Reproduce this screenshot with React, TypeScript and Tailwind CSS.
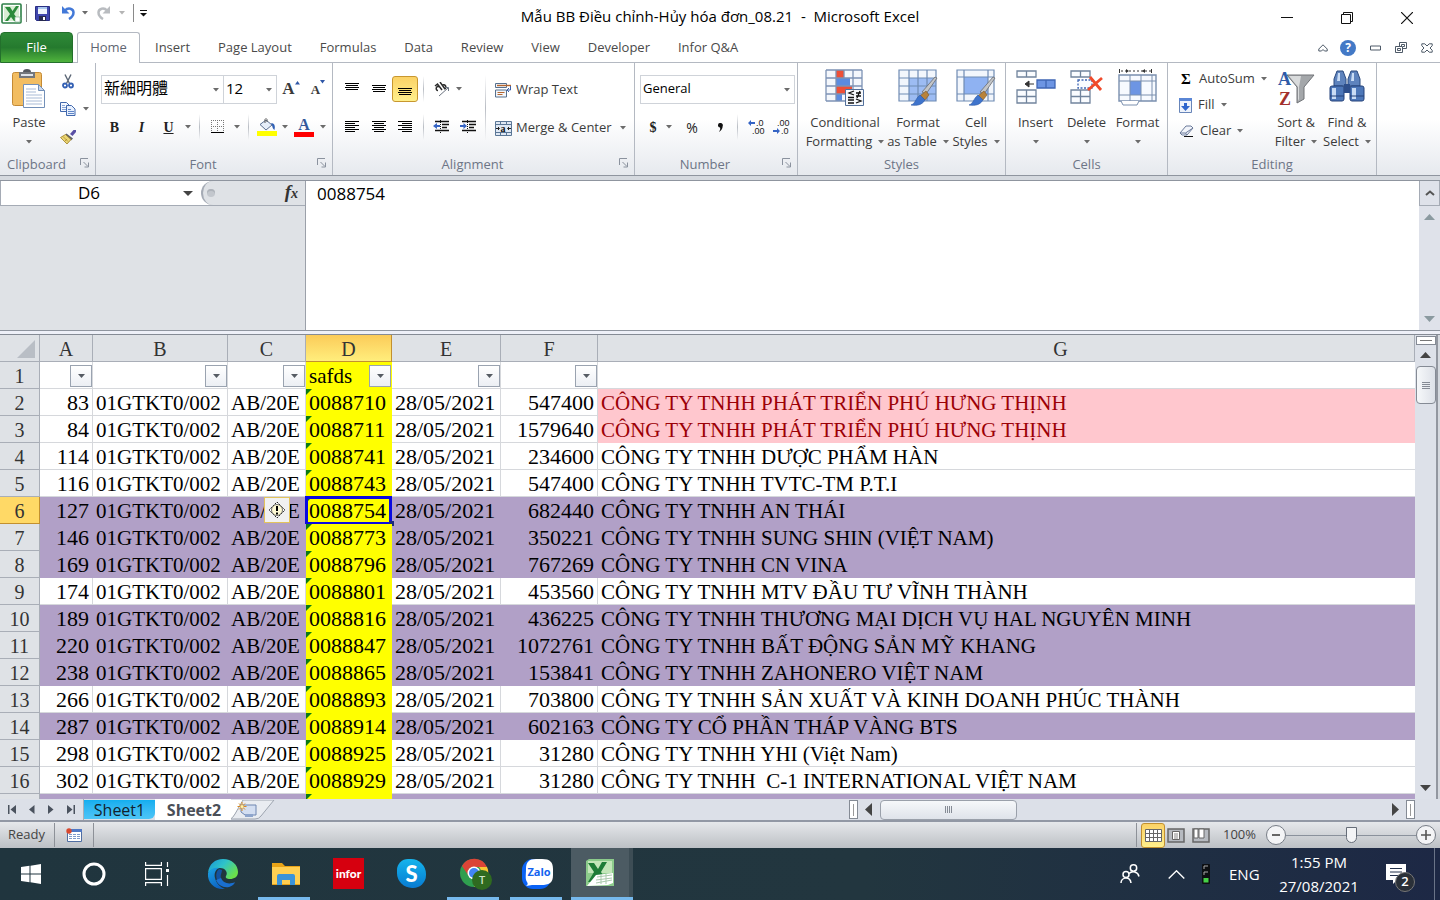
import React from "react";

type Fill = "pink" | "purple" | "none";

type Row = {
  n: number;
  a: string;
  d: string;
  f: string;
  g: string;
  fill: Fill;
};

const rows: Row[] = [
  { n: 2, a: "83", d: "0088710", f: "547400", g: "CÔNG TY TNHH PHÁT TRIỂN PHÚ HƯNG THỊNH", fill: "pink" },
  { n: 3, a: "84", d: "0088711", f: "1579640", g: "CÔNG TY TNHH PHÁT TRIỂN PHÚ HƯNG THỊNH", fill: "pink" },
  { n: 4, a: "114", d: "0088741", f: "234600", g: "CÔNG TY TNHH DƯỢC PHẨM HÀN", fill: "none" },
  { n: 5, a: "116", d: "0088743", f: "547400", g: "CÔNG TY TNHH TVTC-TM P.T.I", fill: "none" },
  { n: 6, a: "127", d: "0088754", f: "682440", g: "CÔNG TY TNHH AN THÁI", fill: "purple" },
  { n: 7, a: "146", d: "0088773", f: "350221", g: "CÔNG TY TNHH SUNG SHIN (VIỆT NAM)", fill: "purple" },
  { n: 8, a: "169", d: "0088796", f: "767269", g: "CÔNG TY TNHH CN VINA", fill: "purple" },
  { n: 9, a: "174", d: "0088801", f: "453560", g: "CÔNG TY TNHH MTV ĐẦU TƯ VĨNH THÀNH", fill: "none" },
  { n: 10, a: "189", d: "0088816", f: "436225", g: "CÔNG TY TNHH THƯƠNG MẠI DỊCH VỤ HAL NGUYÊN MINH", fill: "purple" },
  { n: 11, a: "220", d: "0088847", f: "1072761", g: "CÔNG TY TNHH BẤT ĐỘNG SẢN MỸ KHANG", fill: "purple" },
  { n: 12, a: "238", d: "0088865", f: "153841", g: "CÔNG TY TNHH ZAHONERO VIỆT NAM", fill: "purple" },
  { n: 13, a: "266", d: "0088893", f: "703800", g: "CÔNG TY TNHH SẢN XUẤT VÀ KINH DOANH PHÚC THÀNH", fill: "none" },
  { n: 14, a: "287", d: "0088914", f: "602163", g: "CÔNG TY CỔ PHẦN THÁP VÀNG BTS", fill: "purple" },
  { n: 15, a: "298", d: "0088925", f: "31280", g: "CÔNG TY TNHH YHI (Việt Nam)", fill: "none" },
  { n: 16, a: "302", d: "0088929", f: "31280", g: "CÔNG TY TNHH  C-1 INTERNATIONAL VIỆT NAM", fill: "none" },
];

const tabs = ["Insert", "Page Layout", "Formulas", "Data", "Review", "View", "Developer", "Infor Q&A"];

/* ---------- small shared pieces ---------- */

const Caret = ({ className = "" }: { className?: string }) => (
  <svg width="6" height="4" viewBox="0 0 6 4" className={`shrink-0 ${className}`}>
    <path d="M0 0h6L3 3.5z" fill="#6b6b6b" />
  </svg>
);

const Sep = ({ className = "" }: { className?: string }) => (
  <span className={`flex justify-center ${className}`}>
    <span className="w-px bg-gradient-to-b from-transparent via-[#b9bdc4] to-transparent" />
  </span>
);

const IconButton = ({
  label,
  className = "w-[27px]",
  children,
}: {
  label: string;
  className?: string;
  children: React.ReactNode;
}) => (
  <button type="button" aria-label={label} className={`flex h-[26px] shrink-0 items-center justify-center ${className}`}>
    {children}
  </button>
);

const Group = ({
  title,
  width,
  launcher = false,
  children,
}: {
  title: string;
  width: string;
  launcher?: boolean;
  children: React.ReactNode;
}) => (
  <section className={`flex shrink-0 flex-col border-r border-[#b4b9c2] ${width}`}>
    <div className="flex h-[90px]">{children}</div>
    <div className="flex h-[22px] items-center">
      <h2 className="flex-1 pt-0.5 text-center text-[13px] text-[#6d7586]">{title}</h2>
      {launcher && (
        <button type="button" aria-label={`${title} options`} className="w-[22px] pb-0.5 pl-[7px]">
          <svg width="10" height="10" viewBox="0 0 10 10" fill="none" stroke="#8b929e">
            <path d="M.5 7V.5H8M3.500 4l4.500 4.500M8.500 4.500v4.500H4.500" />
          </svg>
        </button>
      )}
    </div>
  </section>
);

const BigButton = ({
  icon,
  lines,
  width,
}: {
  icon: React.ReactNode;
  lines: [string, string?];
  width: string;
}) => (
  <button type="button" className={`flex shrink-0 flex-col items-center pt-1.5 text-[13px] leading-[19px] text-[#3b3b3b] ${width}`}>
    <span className="flex h-11 items-start justify-center">{icon}</span>
    <span className="whitespace-nowrap">{lines[0]}</span>
    <span className="flex h-[19px] items-center gap-1.5 whitespace-nowrap">
      {lines[1]}
      <Caret />
    </span>
  </button>
);

/* ---------- ribbon icons ---------- */

const ExcelLogo = () => (
  <svg width="21" height="21" viewBox="0 0 21 21">
    <rect x="1" y="1" width="19" height="19" rx="1" fill="#fff" stroke="#2f8048" strokeWidth="1.6" />
    <path d="M3 3h15v11l-4 4H3z" fill="#d9edd4" />
    <path d="M4 4h5l2.500 4L15 3h3l-5 8 5 7h-5l-3-4-3 4H4l5-7z" fill="#2c8b3c" />
    <path d="M14 14h5v5h-5z" fill="#fff" stroke="#8bb896" strokeWidth=".7" />
  </svg>
);

const Save = () => (
  <svg width="15" height="15" viewBox="0 0 15 15">
    <path d="M.5.5h14v14h-13l-1-1z" fill="#3f46ad" stroke="#2a2f83" />
    <path d="M3 1h9v7H3z" fill="#eef4fc" />
    <path d="M3 1h9v2H3z" fill="#a9c7ee" />
    <path d="M4 10h7v5H4z" fill="#26294f" />
    <path d="M8 11h2v3H8z" fill="#fff" />
  </svg>
);

const Undo = ({ color, flip = false }: { color: string; flip?: boolean }) => (
  <svg width="14" height="14" viewBox="0 0 14 14" className={flip ? "-scale-x-100" : ""}>
    <path d="M4 4.500c3-3.500 8.500-2 8.500 2 0 3-2 5-4.500 6.500" fill="none" stroke={color} strokeWidth="2.500" />
    <path d="M1 0v7.500h7.500z" fill={color} />
  </svg>
);

const Paste = () => (
  <svg width="36" height="40" viewBox="0 0 36 40">
    <rect x="1.500" y="3.500" width="29" height="33" rx="2" fill="#f2bd62" stroke="#c48a35" />
    <path d="M8 3h16v6H8z" fill="#73777c" />
    <path d="M12 3a4 3 0 0 1 8 0z" fill="#565a60" />
    <path d="M10 5h12v2H10z" fill="#dfe3e8" />
    <path d="M12.500 15.500h15l6 6v17h-21z" fill="#fff" stroke="#7390b8" />
    <path d="M27.500 15.500v6h6z" fill="#c9d8ee" stroke="#7390b8" />
    <path d="M15 20h10M15 23h10M15 26h16M15 29h16M15 32h16M15 35h16" stroke="#a9bbd6" />
  </svg>
);

const Cut = () => (
  <svg width="12" height="15" viewBox="0 0 12 15" fill="none">
    <path d="M3 .5l4.500 9M9 .5L4.500 9.500" stroke="#5b6675" strokeWidth="1.400" />
    <circle cx="3" cy="11.500" r="2" stroke="#3360b4" strokeWidth="1.800" />
    <circle cx="9" cy="11.500" r="2" stroke="#3360b4" strokeWidth="1.800" />
  </svg>
);

const Copy = () => (
  <svg width="16" height="14" viewBox="0 0 16 14" stroke="#4168ad">
    <path d="M.5.500h6l3 3v6h-9z" fill="#f4f8ff" />
    <path d="M2 3.500h3M2 5.500h5M2 7.500h5" stroke="#88a5d6" />
    <path d="M6.500 3.500h5l3.500 3.500v6.500H6.500z" fill="#e8f0fd" />
    <path d="M8 7.500h3M8 9.500h6M8 11.500h6" stroke="#5f86c8" />
  </svg>
);

const Painter = () => (
  <svg width="16" height="14" viewBox="0 0 16 14">
    <path d="M10 4l3.500-4H16v2l-3.500 4z" fill="#5a50a5" />
    <path d="M6.500 3.500l6.500 5-2 2-6-5.500z" fill="#5e6068" />
    <path d="M5.500 4.500l5.500 5L7 14 .5 7.500z" fill="#ead675" stroke="#9d7d25" strokeWidth=".8" />
    <path d="M3 6.500l5 5M5 11l2-2" stroke="#b18c2c" strokeWidth=".8" />
  </svg>
);

const LetterA = ({ big }: { big: boolean }) => (
  <span className="flex items-start pt-0.5 font-['Liberation_Serif',serif] font-bold text-[#3a3a3a]">
    <span className={big ? "text-[17px] leading-[24px]" : "text-[13px] leading-[27px]"}>A</span>
    <svg width="5" height="4" viewBox="0 0 5 4" className="mt-1">
      <path d={big ? "M0 3.500h5L2.500 0z" : "M0 0h5L2.500 3.500z"} fill="#2f57a7" />
    </svg>
  </span>
);

const Borders = () => (
  <svg width="14" height="14" viewBox="0 0 14 14" stroke="#777" strokeDasharray="1 1">
    <path d="M.5 0v12M6.500 0v12M12.500 0v12M0 .5h13M0 6.500h13" />
    <path d="M0 12.500h13" stroke="#000" strokeDasharray="none" />
  </svg>
);

const Bucket = () => (
  <svg width="20" height="18" viewBox="0 0 20 18">
    <path d="M3 6.500l6-4.500 6 5-6 5z" fill="#e6eefa" stroke="#5b6f92" />
    <path d="M8 5V1.500q1-2 2 0V4" fill="none" stroke="#555" />
    <path d="M14 5q5 0 3.500 7-2-1-2.500-5z" fill="#2e5fb5" />
    <path d="M0 13h20v5H0z" fill="#ff0" />
  </svg>
);

const EDGE = [14, 12, 14, 12];
const BODY = [14, 10, 14, 10, 14, 10];

const AlignLines = ({ widths, align }: { widths: number[]; align: "start" | "middle" | "end" }) => (
  <svg width="14" height={widths.length * 2} viewBox={`0 0 14 ${widths.length * 2}`}>
    {widths.map((w, i) => (
      <rect
        key={i}
        x={align === "start" ? 0 : align === "middle" ? (14 - w) / 2 : 14 - w}
        y={i * 2}
        width={w}
        height="1"
        fill="#000"
      />
    ))}
  </svg>
);

const Orientation = () => (
  <svg width="16" height="15" viewBox="0 0 16 15" fill="none">
    <g stroke="#2c2c2c" strokeWidth="1.500">
      <path d="M1 4l2.500-2L8 8M5.500 5A2 2 0 1 0 4 8.500" />
      <path d="M6 0l5 7M8 3.500A2.200 2.200 0 1 1 10.500 7" />
    </g>
    <path d="M5 14l9-8M14.500 5.500h-3.500M14.500 5.500V9" stroke="#6c7480" />
  </svg>
);

const Indent = ({ out = false }: { out?: boolean }) => (
  <svg width="17" height="14" viewBox="0 0 17 14">
    <path d="M2 1.500h14M9 4.500h7M9 7.500h5M2 10.500h14" stroke="#111" strokeWidth="1.400" />
    <path d="M7.500 0v14" stroke="#111" strokeDasharray="1 1" />
    {out ? <path d="M0 6l4-3v2h3v2H4v2z" fill="#3564c4" /> : <path d="M7 6L3.500 3v2H0v2h3.500v2z" fill="#3564c4" />}
  </svg>
);

const WrapIcon = () => (
  <svg width="17" height="16" viewBox="0 0 17 16" fill="none">
    <path d="M.5 1.500h11v4H.5zM.5 8h11v7H.5z" fill="#f3f6fb" stroke="#56708e" />
    <path d="M2 3.500h14" stroke="#b4662f" strokeWidth="1.400" />
    <path d="M2.500 10.500h7M2.500 12.500h5" stroke="#b4662f" />
    <path d="M15.500 4v4h-3M14 6l-2 2 2 2" stroke="#3b5fa8" />
  </svg>
);

const MergeIcon = () => (
  <svg width="17" height="15" viewBox="0 0 17 15">
    <path d="M.5.500h16v14H.5zM.5 3.500h16M.5 11.500h16M5.500.500v3M11.500.500v3M5.500 11.500v3M11.500 11.500v3" fill="#dfe8f4" stroke="#5a7696" />
    <path d="M1 7.500h3M13 7.500h3M3 6l1.500 1.500L3 9M14 6l-1.500 1.500L14 9" stroke="#222" fill="none" />
    <text x="5.500" y="10.500" fontSize="10" fontWeight="bold" fontFamily="Liberation Serif" fill="#111">a</text>
  </svg>
);

const Decimals = ({ more = false }: { more?: boolean }) => (
  <svg width="18" height="16" viewBox="0 0 18 16" fontSize="9" fontFamily="Liberation Sans">
    <text x={more ? 8 : 4} y="7" fill="#222">{more ? ".0" : ".00"}</text>
    <text x={more ? 4 : 8} y="15" fill="#222">{more ? ".00" : ".0"}</text>
    {more ? <path d="M0 4l3-3v2h4v2H3v2z" fill="#3564c4" /> : <path d="M7 12L4 9v2H0v2h4v2z" fill="#3564c4" />}
  </svg>
);

const CondIcon = () => (
  <svg width="40" height="38" viewBox="0 0 40 38">
    <path d="M1 1h36v31H1z" fill="#f4f7fc" />
    <path d="M11 1h8v8h-8zM11 17h16v8H11z" fill="#ee4f37" />
    <path d="M11 9h14v8H11zM11 25h6v7h-6z" fill="#5b8be0" />
    <path d="M1 1v31M11 1v31M19 1v8M28 1v31M37 1v31M1 1h36M1 9h36M1 17h36M1 25h36M1 32h36" fill="none" stroke="#7d93b5" strokeWidth="1.300" />
    <path d="M20.500 20.500h18v16h-18z" fill="#f7f9fc" stroke="#53709b" />
    <path d="M29 22l-5 2 5 2M23 28.500h6M23 31h6M23 34h6M31 24h5M31 27h5M35 22l-3 7M31 30l5 2-5 2" fill="none" stroke="#111" strokeWidth="1.300" />
  </svg>
);

const Brush = () => (
  <g>
    <path d="M39 9L28 25l-4-2L37 8z" fill="#c3c5c8" stroke="#6a6c70" strokeWidth=".8" />
    <path d="M28 22l3 4-4 5-5-4z" fill="#b8833c" stroke="#7f5520" strokeWidth=".6" />
    <path d="M22 26l5 5c-3 5-8 6-14 5 5-2 4-6 9-10z" fill="#3f74cc" stroke="#2a57a5" strokeWidth=".6" />
  </g>
);

const TableIcon = () => (
  <svg width="40" height="38" viewBox="0 0 40 38">
    <path d="M1 1h37v31H1z" fill="#f2f6fc" />
    <path d="M11 9h27v23H11z" fill="#9dbcf3" />
    <path d="M1 1h37v31H1zM11 1v31M20 1v31M29 1v31M1 9h37M1 17h37M1 25h37" fill="none" stroke="#6f8bb3" strokeWidth="1.200" />
    <Brush />
  </svg>
);

const CellStylesIcon = () => (
  <svg width="40" height="38" viewBox="0 0 40 38">
    <path d="M1 1h37v31H1z" fill="#f2f6fc" />
    <path d="M8 8h24v17H8z" fill="#8fb2f2" />
    <path d="M1 1h37v31H1zM8 1v31M32 1v31M1 8h37M1 25h37" fill="none" stroke="#6f8bb3" strokeWidth="1.200" />
    <Brush />
  </svg>
);

const InsertIcon = () => (
  <svg width="40" height="36" viewBox="0 0 40 36" fill="#fafcff" stroke="#71849d" strokeWidth="1.300">
    <path d="M1 2h19v6H1zM10.500 2v6M1 21h19v13H1zM10.500 21v13M1 27.500h19" />
    <path d="M21 11h18v8H21z" fill="#6d95e3" stroke="#3f66b4" />
    <path d="M30 11v8" stroke="#3f66b4" />
    <path d="M18 15h-7M13 12l-4 3 4 3z" stroke="#333" fill="#333" strokeWidth="1" />
  </svg>
);

const DeleteIcon = () => (
  <svg width="34" height="36" viewBox="0 0 34 36" fill="#fafcff" stroke="#71849d" strokeWidth="1.300">
    <path d="M1 2h19v6H1zM10.500 2v6M1 21h19v13H1zM10.500 21v13M1 27.500h19" />
    <path d="M8 11h14v8H8z" stroke="#3f66b4" strokeDasharray="2 1.500" />
    <path d="M20 8l11 13M32 9L18 21" stroke="#f04a2b" strokeWidth="2.800" fill="none" />
  </svg>
);

const FormatIcon = () => (
  <svg width="40" height="38" viewBox="0 0 40 38" fill="none" stroke="#7a8fae">
    <path d="M1.500 0v4M33.500 0v4" stroke="#333" />
    <path d="M3 2h30" stroke="#333" strokeDasharray="2 2" />
    <path d="M11 2l-3-2v4zM24 2l3-2v4z" fill="#333" stroke="none" />
    <path d="M1 6h37v26H1z" fill="#f7faff" strokeWidth="1.400" />
    <path d="M12 12h11v14H12z" fill="#6d95e3" stroke="none" />
    <path d="M12 6v26M23 6v26M34 6v26M1 12h37M1 26h37" />
    <path d="M3 32l2 4h14l2-4" fill="#fff" />
  </svg>
);

const FillIcon = () => (
  <svg width="13" height="15" viewBox="0 0 13 15">
    <path d="M.5.500h12v14H.5z" fill="#eef3fb" stroke="#6885b8" />
    <path d="M0 0h13v3H0z" fill="#5a86d5" />
    <path d="M5 5h3v3h3l-4.500 5L2 8h3z" fill="#2f66cc" />
  </svg>
);

const EraserIcon = () => (
  <svg width="15" height="12" viewBox="0 0 15 12">
    <path d="M1 8l6-7h5l2 2-6 7H3z" fill="#f2f5fb" stroke="#6b7a9a" />
    <path d="M1 8h5.500L14 3M6.500 8L8 10" fill="none" stroke="#6b7a9a" />
    <path d="M5 11.500h9" stroke="#111" />
  </svg>
);

const SortIcon = () => (
  <svg width="40" height="42" viewBox="0 0 40 42" fontFamily="Liberation Serif" fontWeight="bold" fontSize="18">
    <path d="M11 6h27L28 18v12l-7 4V18z" fill="#a4a7aa" stroke="#707377" />
    <path d="M13 7h12l-2 11v12l-1 2V18z" fill="#d9dbdc" />
    <text x="2" y="16" fill="#2f5ba8">A</text>
    <text x="3" y="36" fill="#a3302c">Z</text>
  </svg>
);

const FindIcon = () => (
  <svg width="36" height="34" viewBox="0 0 36 34">
    <path d="M8 2h6l3 8v7H5V10zM22 2h6l3 8v7H19V10z" fill="#5e83bd" stroke="#2b4a7f" />
    <rect x="1" y="17" width="14" height="15" rx="2" fill="#4d77b8" stroke="#25437a" />
    <rect x="21" y="17" width="14" height="15" rx="2" fill="#4d77b8" stroke="#25437a" />
    <path d="M15 15h6v9h-6z" fill="#2e4f8b" />
    <path d="M3 19h4v11H3zM23 19h4v11h-4zM9 4h2v8H8zM23 4h2v8h-3z" fill="#c9dcf5" />
    <path d="M1 27h14M21 27h14" stroke="#25437a" />
  </svg>
);

/* ---------- window sections ---------- */

const TitleBar = () => (
  <header className="grid h-8 shrink-0 grid-cols-[1fr_auto_1fr] items-center bg-white">
    <div className="flex items-center pb-1.5 pl-px">
      <ExcelLogo />
      <span className="ml-1 h-[18px] w-px bg-[#8a8a8a]" />
      <button type="button" aria-label="Save" className="ml-2"><Save /></button>
      <button type="button" aria-label="Undo" className="ml-[11px]"><Undo color="#4379d8" /></button>
      <Caret className="ml-[7px]" />
      <button type="button" aria-label="Redo" className="ml-[9px]"><Undo color="#b9bcc0" flip /></button>
      <Caret className="ml-2 opacity-50" />
      <span className="ml-2 h-[18px] w-px bg-[#8a8a8a]" />
      <button type="button" aria-label="Customize toolbar" className="ml-1.5">
        <svg width="7" height="7" viewBox="0 0 7 7"><path d="M0 .5h7" stroke="#111" /><path d="M0 3h7L3.500 6.500z" fill="#111" /></svg>
      </button>
    </div>
    <h1 className="whitespace-pre text-[15px] text-black">Mẫu BB Điều chỉnh-Hủy hóa đơn_08.21  -  Microsoft Excel</h1>
    <div className="flex justify-end gap-12 pr-[27px] pt-1">
      <button type="button" aria-label="Minimize">
        <svg width="12" height="12" viewBox="0 0 12 12"><path d="M0 5.500h12" stroke="#111" /></svg>
      </button>
      <button type="button" aria-label="Restore">
        <svg width="12" height="12" viewBox="0 0 12 12" fill="none" stroke="#111"><path d="M.5 2.500h9v9h-9zM2.500 2.500v-2h9v9h-2" /></svg>
      </button>
      <button type="button" aria-label="Close">
        <svg width="12" height="12" viewBox="0 0 12 12"><path d="M0 0l12 12M12 0L0 12" stroke="#111" strokeWidth="1.200" /></svg>
      </button>
    </div>
  </header>
);

const TabBar = () => (
  <nav className="flex h-[31px] shrink-0 items-stretch bg-white text-[13px] text-[#4a4a4a] shadow-[inset_0_-1px_0_#b4b9c2]">
    <button type="button" className="w-[73px] rounded-t border border-[#23702c] bg-gradient-to-b from-[#2f8a38] via-[#257a2e] to-[#4fb33c] text-white">File</button>
    <button type="button" className="ml-1 w-[63px] rounded-t-[3px] border border-b-0 border-[#b4b9c2] bg-white text-[#5f6672]">Home</button>
    <div className="flex pl-px pt-px">
      {tabs.map((t) => (
        <button type="button" key={t} className="px-3.5">{t}</button>
      ))}
    </div>
    <div className="ml-auto flex items-center gap-3 pr-[7px]">
      <button type="button" aria-label="Collapse ribbon">
        <svg width="10" height="8" viewBox="0 0 10 8" fill="none" stroke="#4e5a68"><path d="M.8 5L5 .8 9.200 5v2H6.500L5 5.500 3.500 7H.8z" /></svg>
      </button>
      <button type="button" aria-label="Help" className="flex size-4 items-center justify-center rounded-full bg-[#4379c6] text-[12px] font-bold leading-4 text-white">?</button>
      <button type="button" aria-label="Minimize workbook" className="pl-0.5">
        <svg width="11" height="6" viewBox="0 0 11 6" fill="none" stroke="#4e5a68"><path d="M.5 1h10v4H.5z" /></svg>
      </button>
      <button type="button" aria-label="Restore workbook" className="pl-0.5">
        <svg width="12" height="11" viewBox="0 0 12 11" fill="none" stroke="#4e5a68"><path d="M.5 4.500h7v6h-7zM2.500 6.500h3v2h-3zM4.500 4V.5h7v6H8M6.500 4V2.500h3v2H8" /></svg>
      </button>
      <button type="button" aria-label="Close workbook" className="pl-0.5">
        <svg width="12" height="10" viewBox="0 0 12 10" fill="none" stroke="#4e5a68"><path d="M.8.8h3L6 3 8.200.8h3v2L9 5l2.200 2.200v2h-3L6 7 3.800 9.200h-3v-2L3 5 .8 2.800z" /></svg>
      </button>
    </div>
  </nav>
);

const Dropdown = ({ label, value, className }: { label: string; value: string; className: string }) => (
  <div className={`relative flex h-[29px] border border-[#cfd3d9] bg-white ${className}`}>
    <select aria-label={label} className="w-full appearance-none bg-transparent pl-0.5 pr-3 outline-none">
      <option>{value}</option>
    </select>
    <Caret className="pointer-events-none absolute right-1 top-3" />
  </div>
);

const Ribbon = () => (
  <div className="flex h-[113px] shrink-0 overflow-hidden border-b border-[#8f959f] bg-gradient-to-b from-white from-50% to-[#e6e9ee]">
    <Group title="Clipboard" width="w-[96px]" launcher>
      <BigButton icon={<Paste />} lines={["Paste"]} width="w-[58px]" />
      <div className="flex flex-col pt-[5px]">
        <div className="flex h-[27px] w-5 items-center justify-center"><button type="button" aria-label="Cut"><Cut /></button></div>
        <div className="flex h-[27px] items-center gap-[7px] pl-0.5"><button type="button" aria-label="Copy"><Copy /></button><Caret /></div>
        <div className="flex h-[29px] items-center pl-0.5"><button type="button" aria-label="Format painter"><Painter /></button></div>
      </div>
    </Group>

    <Group title="Font" width="w-[237px]" launcher>
      <div className="flex flex-col pl-[5px] pt-3">
        <div className="flex">
          <Dropdown label="Font" value="新細明體" className="w-[123px] pb-1 text-[16px]" />
          <Dropdown label="Font size" value="12" className="w-[53px] border-l-0 pb-0.5 text-[15px]" />
          <IconButton label="Grow font" className="w-[28px]"><LetterA big /></IconButton>
          <IconButton label="Shrink font" className="w-[26px]"><LetterA big={false} /></IconButton>
        </div>
        <div className="mt-[10px] flex font-['Liberation_Serif',serif] text-[14px] text-[#222]">
          <IconButton label="Bold"><b>B</b></IconButton>
          <IconButton label="Italic"><b><i>I</i></b></IconButton>
          <IconButton label="Underline"><b className="underline">U</b></IconButton>
          <IconButton label="Underline style" className="w-3"><Caret /></IconButton>
          <Sep className="w-[10px]" />
          <IconButton label="Borders"><Borders /></IconButton>
          <IconButton label="Border style" className="w-3"><Caret /></IconButton>
          <Sep className="w-[10px]" />
          <IconButton label="Fill color"><Bucket /></IconButton>
          <IconButton label="Fill palette" className="w-[10px]"><Caret /></IconButton>
          <IconButton label="Font color" className="w-[28px]">
            <span className="flex w-5 flex-col items-center border-b-[5px] border-[#f00] text-[16px] font-bold leading-[14px] text-[#34589b]">A</span>
          </IconButton>
          <IconButton label="Font palette" className="w-[10px]"><Caret /></IconButton>
        </div>
      </div>
    </Group>

    <Group title="Alignment" width="w-[302px]" launcher>
      <div className="flex flex-col gap-3 pl-[5px] pt-[13px]">
        <div className="flex">
          <IconButton label="Top align" className="w-[27px] pb-1"><AlignLines widths={EDGE} align="middle" /></IconButton>
          <IconButton label="Middle align"><AlignLines widths={EDGE} align="middle" /></IconButton>
          <IconButton label="Bottom align" className="w-[26px] rounded-[3px] border border-[#c8972f] bg-gradient-to-b from-[#fbd266] to-[#fff08c] pt-1.5">
            <AlignLines widths={EDGE} align="middle" />
          </IconButton>
          <Sep className="w-[10px]" />
          <IconButton label="Orientation" className="w-[28px]"><Orientation /></IconButton>
          <Caret className="self-center" />
        </div>
        <div className="flex">
          <IconButton label="Align left"><AlignLines widths={BODY} align="start" /></IconButton>
          <IconButton label="Center"><AlignLines widths={BODY} align="middle" /></IconButton>
          <IconButton label="Align right" className="w-[26px]"><AlignLines widths={BODY} align="end" /></IconButton>
          <Sep className="w-[10px]" />
          <IconButton label="Decrease indent"><Indent out /></IconButton>
          <IconButton label="Increase indent"><Indent /></IconButton>
        </div>
      </div>
      <Sep className="my-3 w-[6px]" />
      <div className="flex flex-col gap-3 pl-[7px] pt-3.5 text-[13px] text-[#3b3b3b]">
        <button type="button" className="flex h-[26px] items-center gap-1 whitespace-nowrap"><WrapIcon />Wrap Text</button>
        <button type="button" className="flex h-[26px] items-center gap-1 whitespace-nowrap"><MergeIcon />Merge &amp; Center<Caret className="ml-1" /></button>
      </div>
    </Group>

    <Group title="Number" width="w-[163px]" launcher>
      <div className="flex flex-col pl-[5px] pt-3">
        <Dropdown label="Number format" value="General" className="w-[155px] pb-0.5 text-[13px]" />
        <div className="mt-[10px] flex text-[14px] text-[#222]">
          <IconButton label="Currency" className="w-[26px] font-['Liberation_Serif',serif] font-bold">$</IconButton>
          <Caret className="self-center" />
          <IconButton label="Percent" className="w-10">%</IconButton>
          <IconButton label="Comma" className="w-4">
            <svg width="5" height="9" viewBox="0 0 5 9"><path d="M2.500 0a2.200 2.200 0 0 1 2.200 3c0 3-2 5-3.700 6 1-2 1.500-3 1-4.500A2.200 2.200 0 0 1 2.500 0z" fill="#111" /></svg>
          </IconButton>
          <Sep className="w-[18px]" />
          <IconButton label="Increase decimal" className="w-[22px]"><Decimals more /></IconButton>
          <IconButton label="Decrease decimal" className="w-[28px]"><Decimals /></IconButton>
        </div>
      </div>
    </Group>

    <Group title="Styles" width="w-[208px]">
      <div className="flex pl-1.5">
        <BigButton icon={<CondIcon />} lines={["Conditional", "Formatting"]} width="w-[82px]" />
        <BigButton icon={<TableIcon />} lines={["Format", "as Table"]} width="w-[64px]" />
        <BigButton icon={<CellStylesIcon />} lines={["Cell", "Styles"]} width="w-[52px]" />
      </div>
    </Group>

    <Group title="Cells" width="w-[162px]">
      <div className="flex pl-1">
        <BigButton icon={<InsertIcon />} lines={["Insert"]} width="w-[51px]" />
        <BigButton icon={<DeleteIcon />} lines={["Delete"]} width="w-[51px]" />
        <BigButton icon={<FormatIcon />} lines={["Format"]} width="w-[51px]" />
      </div>
    </Group>

    <Group title="Editing" width="w-[209px]">
      <div className="flex w-[102px] flex-col pl-[11px] pt-[3px] text-[13px] text-[#3b3b3b]">
        <button type="button" className="flex h-[26px] items-center gap-1.5">
          <span className="w-3.5 text-center font-['Liberation_Serif',serif] text-[15px] font-bold text-black">Σ</span>AutoSum<Caret />
        </button>
        <button type="button" className="flex h-[26px] items-center gap-1.5"><FillIcon />Fill<Caret /></button>
        <button type="button" className="flex h-[26px] items-center gap-1.5"><EraserIcon />Clear<Caret /></button>
      </div>
      <BigButton icon={<SortIcon />} lines={["Sort &", "Filter"]} width="w-[52px]" />
      <BigButton icon={<FindIcon />} lines={["Find &", "Select"]} width="w-[50px]" />
    </Group>
  </div>
);

const FormulaBar = () => (
  <div className="mt-1 flex h-[151px] shrink-0 border-b border-t border-[#8f959f] bg-[#dfe2e6]">
    <div className="w-[306px] shrink-0 border-r border-[#9ba0a9]">
      <div className="flex h-[25px] border-b border-[#a5abb5]">
        <div className="flex w-[201px] border-l border-[#a5abb5] bg-white">
          <input aria-label="Name box" defaultValue="D6" className="w-[176px] text-center text-[17px] outline-none" />
          <svg width="10" height="5" viewBox="0 0 10 5" className="ml-1.5 self-center"><path d="M0 0h10L5 5z" fill="#444" /></svg>
        </div>
        <div className="flex flex-1 bg-white">
          <div className="flex flex-1 items-center justify-between rounded-l-full border-l-2 border-[#a5abb5] bg-[#dfe2e6] pl-1 pr-[7px]">
            <span className="size-2 rounded-full bg-[#c3c7cd] shadow-[inset_0_2px_0_#aeb3ba]" />
            <button type="button" aria-label="Insert function" className="font-['Liberation_Serif',serif] text-[19px] font-bold italic leading-6 text-[#333]">
              f<span className="text-[14px]">x</span>
            </button>
          </div>
        </div>
      </div>
    </div>
    <textarea aria-label="Formula bar" defaultValue="0088754" className="flex-1 resize-none bg-white px-[11px] text-[17px] leading-[25px] text-black outline-none" />
    <div className="flex w-[21px] flex-col items-center justify-between bg-[#dfe2ea]">
      <button type="button" aria-label="Collapse formula bar" className="flex h-[25px] w-full items-center justify-center border border-t-0 border-[#a5abb5]">
        <svg width="10" height="6" viewBox="0 0 10 6" fill="none"><path d="M1 5l4-3.500L9 5" stroke="#555" strokeWidth="2" /></svg>
      </button>
      <svg width="11" height="6" viewBox="0 0 11 6" className="mt-2"><path d="M0 6h11L5.500 0z" fill="#8b9aa0" /></svg>
      <svg width="11" height="6" viewBox="0 0 11 6" className="mb-2 mt-auto"><path d="M0 0h11L5.500 6z" fill="#8b9aa0" /></svg>
    </div>
  </div>
);

const FilterButton = () => (
  <button type="button" aria-label="Filter" className="flex size-[22px] items-center justify-center border border-[#9aa3b0] bg-gradient-to-b from-white to-[#eceff4]">
    <svg width="7" height="4" viewBox="0 0 7 4"><path d="M0 0h7L3.500 4z" fill="#555b63" /></svg>
  </button>
);

const ErrorMark = () => (
  <svg width="6" height="6" viewBox="0 0 6 6" className="absolute left-0 top-0"><path d="M0 0h6L0 6z" fill="#0b7a12" /></svg>
);

const fillClass: Record<Fill, string> = {
  none: "border-[#d6d8dc]",
  pink: "border-[#d6d8dc]",
  purple: "border-[#b1a0c7] bg-[#b1a0c7]",
};

const Sheet = () => (
  <table className="w-full table-fixed border-separate border-spacing-0 font-['Liberation_Serif',serif] text-[22px] leading-[24px] text-black">
    <colgroup>
      <col className="w-10" />
      <col className="w-[53px]" />
      <col className="w-[135px]" />
      <col className="w-[78px]" />
      <col className="w-[86px]" />
      <col className="w-[109px]" />
      <col className="w-[97px]" />
      <col />
    </colgroup>
    <thead>
      <tr className="h-[27px] text-[20px] text-[#333]">
        <th className="border-b border-r border-[#a9aeb7] bg-[#dfe2e6] p-0">
          <svg width="18" height="18" viewBox="0 0 18 18" className="ml-auto mr-1 mt-0.5"><path d="M18 0v18H0z" fill="#b9bec5" /></svg>
        </th>
        {["A", "B", "C", "D", "E", "F", "G"].map((c) => (
          <th
            key={c}
            className={`border-b border-r p-0 pt-0.5 font-normal ${
              c === "D" ? "border-[#c2902f] bg-gradient-to-b from-[#fbcb59] to-[#ffee7c]" : "border-[#a9aeb7] bg-[#dfe2e6]"
            } ${c === "G" ? "pl-[109px]" : ""}`}
          >
            {c}
          </th>
        ))}
      </tr>
    </thead>
    <tbody>
      <tr className="h-[27px]">
        <th className="border-b border-r border-[#a9aeb7] bg-[#dfe2e6] p-0 pt-0.5 text-[20px] font-normal text-[#333]">1</th>
        {["", "", "", "safds", "", ""].map((t, i) => (
          <td key={i} className={`border-b border-r p-0 pt-0.5 ${t ? "border-[#ff0] bg-[#ff0]" : "border-[#d6d8dc]"}`}>
            <div className="flex h-[24px] items-center justify-between pl-[3px] text-[21px]">
              <span>{t}</span>
              <FilterButton />
            </div>
          </td>
        ))}
        <td className="border-b border-[#d6d8dc] p-0" />
      </tr>
      {rows.map((r) => (
        <tr key={r.n} className="h-[27px]">
          <th
            className={`border-b border-r p-0 pt-0.5 text-[20px] font-normal text-[#333] ${
              r.n === 6 ? "border-[#c2902f] bg-[#ffd966]" : "border-[#a9aeb7] bg-[#dfe2e6]"
            }`}
          >
            {r.n}
          </th>
          <td className={`border-b border-r p-0 pr-[3px] pt-0.5 text-right ${fillClass[r.fill]}`}>{r.a}</td>
          <td className={`border-b border-r p-0 pl-[3px] pt-0.5 text-[21px] ${fillClass[r.fill]}`}>01GTKT0/002</td>
          <td className={`relative border-b border-r p-0 pl-[3px] pt-0.5 text-[21px] ${fillClass[r.fill]}`}>
            AB/20E
            {r.n === 6 && (
              <button type="button" aria-label="Number stored as text" className="absolute left-9 top-0 flex h-[26px] w-[26px] items-center justify-center border border-[#e3c35c] bg-[#f1f1f1]">
                <svg width="18" height="18" viewBox="0 0 18 18">
                  <path d="M9 1l8 8-8 8-8-8z" fill="#fff" stroke="#222" strokeDasharray="2 1" />
                  <circle cx="9" cy="9" r="5.500" fill="#fffbd5" stroke="#333" strokeWidth=".7" />
                  <path d="M9 5v5M9 11.500v2" stroke="#000" strokeWidth="2" />
                </svg>
              </button>
            )}
          </td>
          <td className="relative border-b border-r border-[#ff0] bg-[#ff0] p-0 pl-[3px] pt-0.5">
            <ErrorMark />
            {r.d}
            {r.n === 6 && (
              <>
                <span className="absolute -inset-x-px -bottom-0.5 -top-px border-[3px] border-[#0a0ae0]" />
                <span className="absolute -bottom-[3px] -right-[3px] size-[5px] bg-[#1b2a7a]" />
              </>
            )}
          </td>
          <td className={`border-b border-r p-0 pl-[3px] pt-0.5 ${fillClass[r.fill]}`}>28/05/2021</td>
          <td className={`border-b border-r p-0 pr-[3px] pt-0.5 text-right ${fillClass[r.fill]}`}>{r.f}</td>
          <td
            className={`whitespace-pre border-b p-0 pl-[3px] pt-0.5 text-[21px] ${
              r.fill === "pink" ? "border-[#ffc7ce] bg-[#ffc7ce] text-[#9c0006]" : fillClass[r.fill]
            }`}
          >
            {r.g}
          </td>
        </tr>
      ))}
      <tr className="h-[27px]">
        <th className="border-r border-[#a9aeb7] bg-[#dfe2e6] p-0" />
        <td colSpan={3} className="bg-[#b1a0c7] p-0" />
        <td className="relative bg-[#ff0] p-0"><ErrorMark /></td>
        <td colSpan={3} className="bg-[#b1a0c7] p-0" />
      </tr>
    </tbody>
  </table>
);

const VerticalScroll = () => (
  <div className="mr-0.5 flex w-[23px] shrink-0 flex-col items-center border-r-2 border-[#9297a0] bg-[#dde1e9]">
    <span className="mt-px flex h-[9px] w-5 items-center justify-center border border-[#858b95] bg-white"><span className="h-px w-3 bg-[#777]" /></span>
    <svg width="11" height="6" viewBox="0 0 11 6" className="mt-[7px]"><path d="M0 6h11L5.500 0z" fill="#444" /></svg>
    <span className="mt-2 flex h-[38px] w-5 flex-col items-center justify-center gap-px rounded-sm border border-[#858b95] bg-gradient-to-r from-[#f6f8fa] to-[#dde1e8]">
      <i className="h-px w-2 bg-[#858b95]" />
      <i className="h-px w-2 bg-[#858b95]" />
      <i className="h-px w-2 bg-[#858b95]" />
      <i className="h-px w-2 bg-[#858b95]" />
    </span>
    <svg width="11" height="6" viewBox="0 0 11 6" className="mb-2 mt-auto"><path d="M0 0h11L5.500 6z" fill="#444" /></svg>
  </div>
);

const SheetTabs = () => (
  <div className="flex h-[23px] shrink-0 border-b-2 border-[#9298a5] bg-[#dce0e8]">
    <div className="flex w-[84px] items-center justify-between border-r border-[#a9aeb7] pl-2 pr-2">
      <button type="button" aria-label="First sheet"><svg width="8" height="9" viewBox="0 0 8 9"><path d="M0 0h1.500v9H0zM8 0v9L2.500 4.500z" fill="#4a525e" /></svg></button>
      <button type="button" aria-label="Previous sheet"><svg width="6" height="9" viewBox="0 0 6 9"><path d="M5.500 0v9L0 4.500z" fill="#4a525e" /></svg></button>
      <button type="button" aria-label="Next sheet"><svg width="6" height="9" viewBox="0 0 6 9"><path d="M0 0v9l5.500-4.500z" fill="#4a525e" /></svg></button>
      <button type="button" aria-label="Last sheet"><svg width="8" height="9" viewBox="0 0 8 9"><path d="M6.500 0H8v9H6.500zM0 0v9l5.500-4.500z" fill="#4a525e" /></svg></button>
    </div>
    <button type="button" className="my-px w-[71px] rounded-br-md bg-gradient-to-b from-[#12aeef] to-[#4cc5f7] text-[16px] leading-[18px] text-[#12222e]">Sheet1</button>
    <button type="button" className="w-[76px] bg-white pl-0.5 text-[16px] font-bold leading-[20px] text-[#4a4f57]">Sheet2</button>
    <button type="button" aria-label="Insert worksheet">
      <svg width="44" height="20" viewBox="0 0 44 20">
        <path d="M0 0h12L4 14Q2 18-2 20z" fill="#fff" />
        <path d="M-2 20Q2 18 4 14L12 0h31L30 16q-2 3-6 3H-2" fill="#e9ecf1" stroke="#9da4af" />
        <path d="M10 5h15v10H14l-4-3z" fill="#d3def1" stroke="#6f86b0" />
        <path d="M14 14h8v3h-8z" fill="#8ea5cc" />
        <path d="M11 2v9M6.500 6.500h9M8 3.500l6 6M14 3.500l-6 6" stroke="#d98a1f" />
        <circle cx="11" cy="6.500" r="1.500" fill="#fff2a8" />
      </svg>
    </button>
    <div className="ml-auto flex w-[591px] items-center pr-[25px]">
      <span className="flex h-[19px] w-[9px] items-center justify-center border border-[#858b95] bg-white"><span className="h-3 w-px bg-[#999]" /></span>
      <svg width="7" height="13" viewBox="0 0 7 13" className="ml-[7px]"><path d="M7 0v13L0 6.500z" fill="#444" /></svg>
      <span className="ml-2 flex h-[20px] w-[137px] items-center justify-center gap-px rounded-sm border border-[#9aa0aa] bg-gradient-to-b from-[#f6f8fa] to-[#dfe3ea]">
        <i className="h-[7px] w-px bg-[#858b95]" />
        <i className="h-[7px] w-px bg-[#858b95]" />
        <i className="h-[7px] w-px bg-[#858b95]" />
        <i className="h-[7px] w-px bg-[#858b95]" />
      </span>
      <svg width="7" height="13" viewBox="0 0 7 13" className="ml-auto"><path d="M0 0v13l7-6.500z" fill="#444" /></svg>
      <span className="ml-[7px] flex h-[19px] w-[9px] items-center justify-center border border-[#858b95] bg-white"><span className="h-3 w-px bg-[#999]" /></span>
    </div>
  </div>
);

const StatusBar = () => (
  <footer className="flex h-[26px] shrink-0 items-center bg-gradient-to-b from-[#e6e8eb] to-[#bcc0c5] text-[13px] text-[#444]">
    <span className="w-[54px] pl-2">Ready</span>
    <span className="h-6 w-px bg-[#8d9198]" />
    <button type="button" aria-label="Record macro" className="flex w-[38px] justify-center">
      <svg width="16" height="14" viewBox="0 0 16 14">
        <path d="M1.500 1.500h14v12h-14z" fill="#fff" stroke="#4f6ea3" />
        <path d="M1 1h15v3H1z" fill="#4f78c4" />
        <path d="M3 6.500h11M3 8.500h11M3 10.500h11" stroke="#7f9ccb" strokeDasharray="3 1" />
        <circle cx="3" cy="3" r="2.700" fill="#d8492f" />
      </svg>
    </button>
    <span className="h-6 w-px bg-[#8d9198]" />
    <div className="ml-auto flex items-center">
      <span className="mr-1 h-6 w-px bg-[#8d9198]" />
      <button type="button" aria-label="Normal view" className="flex h-[25px] w-6 items-center justify-center rounded-[3px] border border-[#c2902f] bg-gradient-to-b from-[#fbd266] to-[#fff08c]">
        <svg width="17" height="13" viewBox="0 0 17 13"><path d="M.5.500h16v12H.5zM.5 4.500h16M.5 8.500h16M4.500.500v12M8.500.500v12M12.500.500v12" fill="#fff" stroke="#666" /></svg>
      </button>
      <button type="button" aria-label="Page layout view" className="ml-0.5">
        <svg width="18" height="15" viewBox="0 0 18 15"><path d="M1 1h16v13H1z" fill="#b6bac0" stroke="#666" strokeWidth="1.500" /><path d="M5.500 3.500h7v8h-7z" fill="#fff" stroke="#666" /><path d="M7 6h4M7 8h4M7 10h4" stroke="#888" /></svg>
      </button>
      <button type="button" aria-label="Page break view" className="ml-[7px]">
        <svg width="18" height="15" viewBox="0 0 18 15"><path d="M1 1h16v13H1z" fill="#b6bac0" stroke="#666" strokeWidth="1.500" /><path d="M2 1h4v9H2zM7 1h5v9H7z" fill="#fff" stroke="#666" /></svg>
      </button>
      <span className="ml-[13px] w-9">100%</span>
      <button type="button" aria-label="Zoom out" className="ml-[7px] flex size-5 items-center justify-center rounded-full border border-[#777d86] bg-[#f3f4f6]"><span className="h-0.5 w-2 bg-[#666]" /></button>
      <input
        type="range"
        aria-label="Zoom"
        defaultValue={50}
        className="h-4 w-[130px] appearance-none bg-[linear-gradient(#8a919c,#8a919c)] bg-[length:100%_1px] bg-center bg-no-repeat [&::-webkit-slider-thumb]:h-4 [&::-webkit-slider-thumb]:w-[11px] [&::-webkit-slider-thumb]:appearance-none [&::-webkit-slider-thumb]:rounded-b-full [&::-webkit-slider-thumb]:border [&::-webkit-slider-thumb]:border-[#666d78] [&::-webkit-slider-thumb]:bg-[#f3f4f6]"
      />
      <button type="button" aria-label="Zoom in" className="mr-1 flex size-5 items-center justify-center rounded-full border border-[#777d86] bg-[#f3f4f6]">
        <svg width="10" height="10" viewBox="0 0 10 10"><path d="M5 0v10M0 5h10" stroke="#555" strokeWidth="1.600" /></svg>
      </button>
    </div>
  </footer>
);

/* ---------- taskbar ---------- */

const TaskSlot = ({ label, open = false, children }: { label: string; open?: boolean; children: React.ReactNode }) => (
  <button type="button" aria-label={label} className="flex h-full w-[63px] flex-col items-center">
    <span className="flex flex-1 items-center pt-0.5">{children}</span>
    <span className={`h-[3px] w-[52px] ${open ? "bg-[#76b9ed]" : ""}`} />
  </button>
);

const Taskbar = () => (
  <div className="flex h-[52px] shrink-0 bg-gradient-to-r from-[#20353e] via-[#22363f] via-60% to-[#1d2845] text-white">
    <TaskSlot label="Start">
      <svg width="20" height="20" viewBox="0 0 20 20" fill="#fff" className="mr-0.5"><path d="M0 3l8.500-1.200v7.700H0zM9.500 1.700L20 0v9.500H9.500zM0 10.500h8.500v7.700L0 17zM9.500 10.500H20V20L9.500 18.300z" /></svg>
    </TaskSlot>
    <TaskSlot label="Search">
      <svg width="24" height="24" viewBox="0 0 24 24" fill="none" className="mr-0.5"><circle cx="12" cy="12" r="10" stroke="#fff" strokeWidth="3" /></svg>
    </TaskSlot>
    <TaskSlot label="Task view">
      <svg width="25" height="24" viewBox="0 0 25 24" fill="none" stroke="#fff" strokeWidth="1.200"><path d="M.6 0v3.400h15.800V0M.6 24v-3.400h15.800V24M.6 6.600h15.800v10.800H.6zM22.500 0v5M22.500 13v11" /><path d="M21 7h3v3h-3z" fill="#fff" stroke="none" /></svg>
    </TaskSlot>
    <TaskSlot label="Edge">
      <svg width="32" height="32" viewBox="0 0 32 32" className="ml-1">
        <defs>
          <linearGradient id="edgeTop" x1="0" y1="0" x2="1" y2=".6"><stop offset="0" stopColor="#1795d8" /><stop offset=".5" stopColor="#2fc3c9" /><stop offset="1" stopColor="#6be04a" /></linearGradient>
          <linearGradient id="edgeLow" x1="0" y1="0" x2=".5" y2="1"><stop offset="0" stopColor="#1ba5e4" /><stop offset="1" stopColor="#0d63c4" /></linearGradient>
        </defs>
        <path d="M1 15C2 6 8 1 16 1c9 0 15 6 15 13 0 5-4 7-8 7-3 0-5-1-4-3 2-3 0-8-6-8-6 0-11 3-12 5z" fill="url(#edgeTop)" />
        <path d="M1 15c2-4 6-6 11-5-4 2-5 6-4 10 1 5 5 9 10 11C8 32 0 25 1 15z" fill="url(#edgeLow)" />
        <path d="M12 11c-5 4-3 14 4 17 4 2 9 1 12-3-7 3-13 0-14-5-1-3 1-5 1-8z" fill="#1352a0" />
        <path d="M9 22c2 5 7 8 13 7 3-1 5-3 6-5-6 3-12 1-14-4z" fill="#1a6fd0" />
      </svg>
    </TaskSlot>
    <TaskSlot label="File explorer" open>
      <svg width="28" height="24" viewBox="0 0 28 24" className="ml-1">
        <path d="M0 1h10l3 3h15v19H0z" fill="#e8a317" />
        <path d="M0 5h28v17H0z" fill="#ffcf52" />
        <path d="M5 23v-9q0-2 2-2h14q2 0 2 2v9h-5v-5h-8v5z" fill="#3b93d9" />
      </svg>
    </TaskSlot>
    <TaskSlot label="Infor">
      <span className="ml-1 flex size-[31px] items-center justify-center bg-[#d6000f] font-[Lato,sans-serif] text-[12px] font-black">infor</span>
    </TaskSlot>
    <TaskSlot label="Skype">
      <span className="ml-1 flex size-[29px] items-center justify-center rounded-[11px_15px_13px_15px] bg-gradient-to-b from-[#17b4ec] to-[#0a7bd2] font-[Lato,sans-serif] text-[22px] font-black leading-7">S</span>
    </TaskSlot>
    <TaskSlot label="Chrome" open>
      <svg width="34" height="34" viewBox="0 0 34 34" className="ml-1.5">
        <circle cx="15" cy="16" r="14" fill="#2f9e4f" />
        <path d="M3 9A14 14 0 0 1 28 10H15a6 6 0 0 0-6 8z" fill="#dc4437" />
        <path d="M28 10a14 14 0 0 1-13 20l6-11a7 7 0 0 0-1-9z" fill="#fbc732" />
        <circle cx="15" cy="16" r="6.500" fill="#fff" />
        <circle cx="15" cy="16" r="5" fill="#4285f4" />
        <circle cx="23" cy="23" r="10" fill="#2f6a20" />
        <text x="23" y="27" textAnchor="middle" fontSize="11" fontFamily="Open Sans" fontWeight="600" fill="#cfe3c9">T</text>
      </svg>
    </TaskSlot>
    <TaskSlot label="Zalo" open>
      <svg width="32" height="32" viewBox="0 0 32 32" className="ml-1">
        <rect x="0" y="1" width="29" height="30" rx="11" fill="#0a62f5" />
        <path d="M14 1h6c8 0 11 3 11 10v6c0 8-4 10-12 10H10l-6 1c2-1 2-3 1-4-2-3-1-7-1-13C4 4 7 1 14 1z" fill="#fff" />
        <text x="17" y="18" textAnchor="middle" fontSize="11" fontFamily="Open Sans" fontWeight="700" fill="#1263f0">Zalo</text>
      </svg>
    </TaskSlot>
    <button type="button" aria-label="Excel" className="ml-1 flex h-full w-[62px] flex-col border-b-[3px] border-[#76b9ed]">
      <span className="flex w-full flex-1 items-center border-r-4 border-[#3d4d55] bg-[#4c5b63] pl-[14px]">
        <svg width="30" height="29" viewBox="0 0 30 29">
          <path d="M1 3l3-2h25v27H1z" fill="#8ccb8b" />
          <path d="M3 3h24v12H3z" fill="#c3e6b9" />
          <path d="M3 5h6l4 6 4-7h5l-6 10 6 10h-6l-4-6-4 6H3l6-10z" fill="#1e7c37" />
          <path d="M11 17l17-2v10l-5 2-21 1z" fill="#fff" />
          <path d="M12 19l15-2M11 22l16-2M11 25l16-3M16 17v9M21 16v10" stroke="#a9c9ac" />
        </svg>
      </span>
    </button>

    <div className="ml-auto flex items-center">
      <button type="button" aria-label="People">
        <svg width="20" height="20" viewBox="0 0 20 20" fill="none" stroke="#fff" strokeWidth="1.500"><circle cx="13.500" cy="4" r="3.200" /><circle cx="6" cy="10.500" r="3" /><path d="M9 9.500c3-3 9-2 10 3M1 19c0-6 9-7 10 0" /></svg>
      </button>
      <button type="button" aria-label="Show hidden icons" className="ml-7">
        <svg width="17" height="9" viewBox="0 0 17 9" fill="none" stroke="#fff" strokeWidth="1.400"><path d="M.7 8.500L8.500.8l7.800 7.700" /></svg>
      </button>
      <svg width="8" height="20" viewBox="0 0 8 20" className="ml-[17px]"><rect width="8" height="20" rx="1" fill="#0d0f12" /><path d="M2 5V2h4M2 11V8h4" stroke="#aaa" fill="none" /><path d="M1.500 14h5v4.500h-5z" fill="#45d146" /></svg>
      <span className="ml-[19px] w-[32px] text-[15px]">ENG</span>
      <div className="ml-[10px] w-24 text-center text-[15px] leading-6">
        <div>1:55 PM</div>
        <div>27/08/2021</div>
      </div>
      <button type="button" aria-label="Notifications" className="relative ml-[19px] size-8">
        <svg width="20" height="20" viewBox="0 0 20 20"><path d="M0 0h20v16h-9l-4 4v-4H0z" fill="#fff" /><path d="M4 4.500h12M4 8h12M4 11.500h8" stroke="#23304a" /></svg>
        <span className="absolute left-[9px] top-[14px] flex size-5 items-center justify-center rounded-full border border-[#777] bg-[#2a3038] text-[13px] font-semibold">2</span>
      </button>
      <span className="ml-4 mr-[5px] h-[52px] w-px bg-[#6a7488]" />
    </div>
  </div>
);

const App = () => {
  return (
    <div className="flex h-screen flex-col overflow-hidden bg-[#d5d9df] font-['Open_Sans','Noto_Sans_CJK_TC',sans-serif]">
      <TitleBar />
      <TabBar />
      <Ribbon />
      <FormulaBar />
      <div className="h-1 shrink-0 border-b border-[#858b95] bg-[#eef0f8]" />
      <main className="flex min-h-0 flex-1">
        <div className="min-w-0 flex-1 overflow-hidden bg-white">
          <Sheet />
        </div>
        <VerticalScroll />
      </main>
      <SheetTabs />
      <StatusBar />
      <Taskbar />
    </div>
  );
};

export default App;
